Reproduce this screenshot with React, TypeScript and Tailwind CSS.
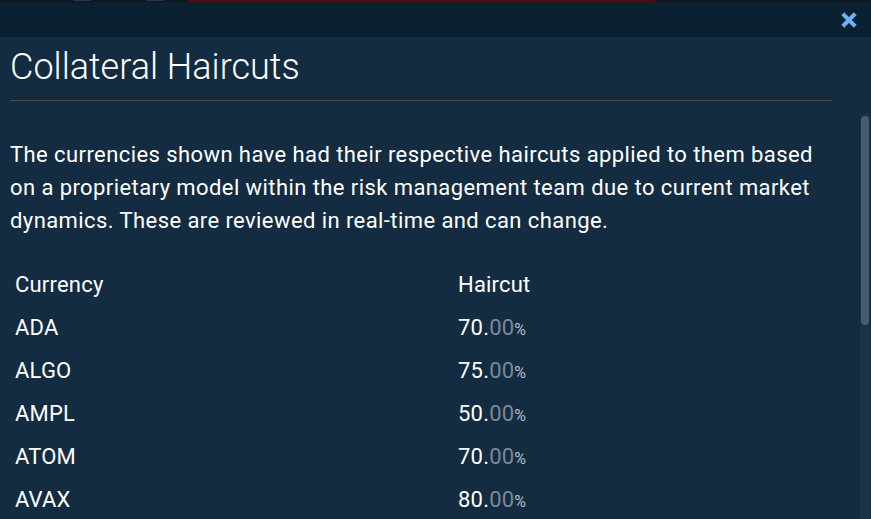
import React from "react";

const rows: [string, string][] = [
  ["ADA", "70"],
  ["ALGO", "75"],
  ["AMPL", "50"],
  ["ATOM", "70"],
  ["AVAX", "80"],
  ["BAT", "75"],
  ["BCH", "40"],
  ["COMP", "75"],
  ["DOGE", "70"],
  ["DOT", "70"],
  ["EOS", "75"],
  ["ETC", "60"],
  ["FIL", "70"],
  ["LINK", "60"],
];

export default function App() {
  return (
    <div
      className="w-[871px] h-[519px] overflow-hidden flex flex-col bg-[#132c41] text-white"
      style={{ fontFamily: "Roboto, 'Liberation Sans', sans-serif" }}
    >
      <div className="h-[2px] flex bg-[#10181f] shrink-0">
        <div className="w-[73px]" />
        <div className="w-[18px] h-[1px] bg-[#2b3440]" />
        <div className="w-[55px]" />
        <div className="w-[18px] h-[1px] bg-[#2b3440]" />
        <div className="w-[24px]" />
        <div className="w-[467px] bg-[#5a0a0d]" />
      </div>
      <div className="h-[35px] shrink-0 bg-[#0b2131] flex items-center justify-end pr-[14px]">
        <svg width="16" height="16" viewBox="0 0 16 16">
          <path d="M3.2 3.2 L12.8 12.8 M12.8 3.2 L3.2 12.8" stroke="#6fb2f3" strokeWidth="4" strokeLinecap="square" />
        </svg>
      </div>
      <div className="flex-1 min-h-0 flex flex-col">
        <div className="pl-[10px] pr-[39px] pt-[9px] shrink-0">
          <h1 className="text-[36px] leading-[43px] font-light pb-[11px] border-b border-[#4b4d4f]">
            Collateral Haircuts
          </h1>
        </div>
        <div className="flex-1 min-h-0 mt-[12px] flex">
          <div className="flex-1 min-w-0 overflow-hidden pl-[10px] pr-[19px] pt-[25px]">
            <p className="text-[22px] leading-[33px] tracking-[0.42px]">
              The currencies shown have had their respective haircuts applied to them based on a proprietary model within the risk management team due to current market dynamics. These are reviewed in real-time and can change.
            </p>
            <div className="mt-[26px] grid grid-cols-[443px_1fr] text-[22px] tracking-[0.2px]">
              <div className="pl-[5px] h-[43px] leading-[43px]">Currency</div>
              <div className="pl-[5px] h-[43px] leading-[43px]">Haircut</div>
              {rows.map(([c, v]) => (
                <React.Fragment key={c}>
                  <div className="pl-[5px] h-[43px] leading-[43px]">{c}</div>
                  <div className="pl-[5px] h-[43px] leading-[43px]">
                    {v}.<span className="text-[#7c8894]">00</span>
                    <span className="text-[16px] leading-none text-[#b4bcc4]">%</span>
                  </div>
                </React.Fragment>
              ))}
            </div>
          </div>
          <div className="w-[10px] mr-[1px] bg-[#1a3248] shrink-0 pt-[3px]">
            <div className="mx-[1px] h-[209px] rounded-[4px] bg-[#4a5c6c]" />
          </div>
        </div>
      </div>
    </div>
  );
}
